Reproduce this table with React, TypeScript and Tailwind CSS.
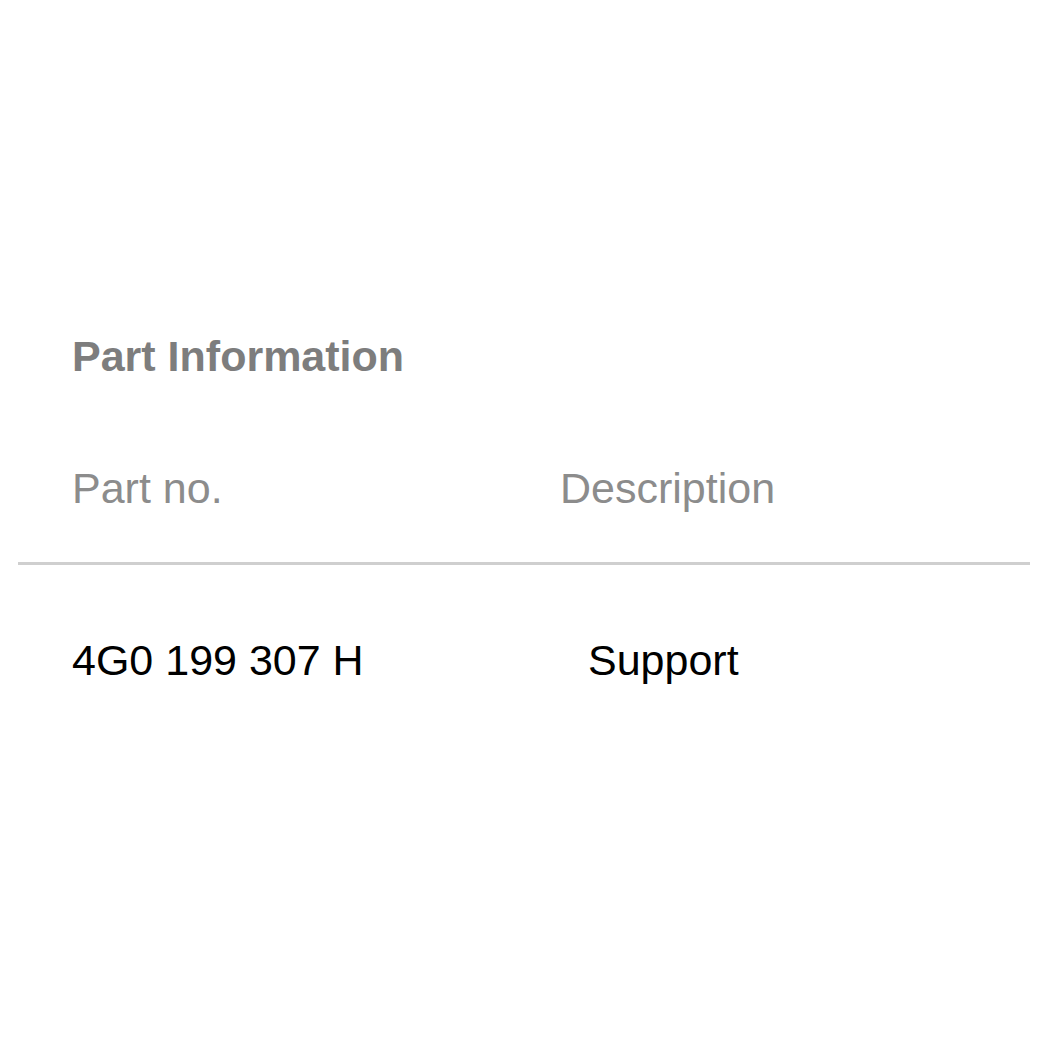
export default function App() {
  return (
    <div className="w-[1050px] h-[1050px] bg-white font-['Liberation_Sans',Arial,sans-serif] pt-[335px]">
      <h2 className="pl-[72px] text-[43px] leading-[43px] font-bold text-[#7d7d7d]">
        Part Information
      </h2>

      <div className="mt-[89px] flex pl-[72px] text-[43px] leading-[43px] text-[#8c8c8c]">
        <div className="w-[488px]">Part no.</div>
        <div>Description</div>
      </div>

      <div className="mt-[52px] ml-[18px] w-[1012px] h-[3px] bg-[#cfcfcf]" />

      <div className="mt-[74px] flex pl-[72px] text-[43px] leading-[43px] text-black">
        <div className="w-[516px]">4G0 199 307 H</div>
        <div>Support</div>
      </div>
    </div>
  );
}
